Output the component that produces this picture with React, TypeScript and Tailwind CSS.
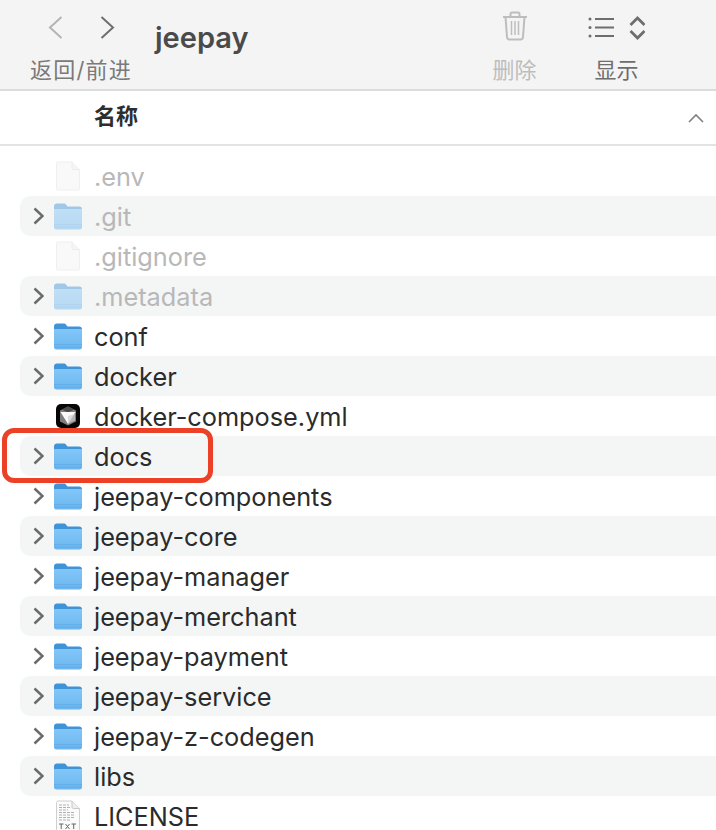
const rows: { name: string; kind: 'file' | 'folder' | 'docker' | 'txt'; dim?: boolean }[] = [
  { name: '.env', kind: 'file', dim: true },
  { name: '.git', kind: 'folder', dim: true },
  { name: '.gitignore', kind: 'file', dim: true },
  { name: '.metadata', kind: 'folder', dim: true },
  { name: 'conf', kind: 'folder' },
  { name: 'docker', kind: 'folder' },
  { name: 'docker-compose.yml', kind: 'docker' },
  { name: 'docs', kind: 'folder' },
  { name: 'jeepay-components', kind: 'folder' },
  { name: 'jeepay-core', kind: 'folder' },
  { name: 'jeepay-manager', kind: 'folder' },
  { name: 'jeepay-merchant', kind: 'folder' },
  { name: 'jeepay-payment', kind: 'folder' },
  { name: 'jeepay-service', kind: 'folder' },
  { name: 'jeepay-z-codegen', kind: 'folder' },
  { name: 'libs', kind: 'folder' },
  { name: 'LICENSE', kind: 'txt' },
]

const cjk = "font-['Inter','Noto_Sans_CJK_SC',sans-serif]"

function FolderIcon({ id }: { id: string }) {
  return (
    <svg width="28" height="27" viewBox="0 0 28 27" className="shrink-0">
      <defs>
        <linearGradient id={`body-${id}`} x1="0" y1="0" x2="0" y2="1">
          <stop offset="0" stopColor="#82c6f7" />
          <stop offset="1" stopColor="#6ab6f0" />
        </linearGradient>
      </defs>
      <path d="M0 3.500C0 1.600 1.200.5 3 .5h6.500c1.300 0 2 .5 2.800 1.400L13.500 3.500H25c2 0 3 1 3 3V12H0Z" fill="#3f93d9" />
      <path d="M0 7c0-.6.4-1 1-1h26c.6 0 1 .4 1 1v17c0 1.700-1 2.500-2.500 2.500h-23C1 26.500 0 25.700 0 24Z" fill={`url(#body-${id})`} />
      <rect x="0" y="21" width="28" height="1" fill="#579fdc" opacity="0.5" />
      <rect x="0" y="23.500" width="28" height="1" fill="#579fdc" opacity="0.5" />
    </svg>
  )
}

function BlankFile() {
  return (
    <svg width="26" height="30" viewBox="0 0 26 30" className="shrink-0">
      <path d="M1.500 2.500c0-1 .6-1.500 1.500-1.500h14l7.500 7.500V27.500c0 1-.6 1.500-1.500 1.500H3c-.9 0-1.500-.5-1.500-1.500Z" fill="#f3f3f3" stroke="#dcdcdc" />
      <path d="M17 1v6c0 1 .5 1.500 1.500 1.500h6" fill="#e9e9e9" stroke="#d6d6d6" />
    </svg>
  )
}

function TxtFile() {
  return (
    <svg width="26" height="32" viewBox="0 0 26 32" className="shrink-0">
      <path d="M1.500 2.500c0-1 .6-1.500 1.500-1.500h14l7.500 7.500V29.500c0 1-.6 1.500-1.500 1.500H3c-.9 0-1.500-.5-1.500-1.500Z" fill="#fbfbfb" stroke="#cfcfcf" />
      <path d="M17 1v6c0 1 .5 1.500 1.500 1.500h6" fill="#eee" stroke="#c8c8c8" />
      <path d="M4 5h10M4 7.500h11M4 10h9M4 12.500h16M4 15h15M4 17.500h16M4 20h12" stroke="#b0b0b0" strokeWidth="1" strokeDasharray="3 1" />
      <path d="M4 24h4.500M6.200 24v5M10.500 24l4 5M14.500 24l-4 5M16.500 24h4.500M18.700 24v5" stroke="#666" strokeWidth="1" fill="none" />
    </svg>
  )
}

function DockerIcon() {
  return (
    <svg width="26" height="26" viewBox="0 0 26 26" className="shrink-0">
      <rect x="1" y="1" width="24" height="24" rx="5" fill="#050505" />
      <path d="M13 3.500L21 7.500V18.500L13 22.500 5 18.500V7.500Z" fill="#7d7d7d" />
      <path d="M13 3.500L19 6.500 13 9.500 7 6.500Z" fill="#4a4a4a" />
      <path d="M5.500 9L20.500 9 13 21Z" fill="#fafafa" />
      <path d="M13 13v8l7-3.500V11Z" fill="#cfcfcf" opacity="0.7" />
    </svg>
  )
}

function Row({ name, kind, dim, striped, id }: { name: string; kind: string; dim?: boolean; striped: boolean; id: string }) {
  return (
    <div className={`ml-[20px] h-10 flex items-center rounded-l-[10px] ${striped ? 'bg-[#f4f5f5]' : ''}`}>
      <div className="w-[34px] shrink-0 pl-[13px]">
        {kind === 'folder' && (
          <svg width="11" height="18" viewBox="0 0 11 18" className="block">
            <path d="M1.500 1.500L9.500 9l-8 7.500" fill="none" stroke="#6b6b6b" strokeWidth="2.500" />
          </svg>
        )}
      </div>
      <div className={`w-[40px] shrink-0 flex ${dim ? 'opacity-45' : ''} ${kind === 'folder' ? '' : 'pl-[1px]'}`}>
        {kind === 'folder' && <FolderIcon id={id} />}
        {kind === 'file' && <BlankFile />}
        {kind === 'docker' && <DockerIcon />}
        {kind === 'txt' && <TxtFile />}
      </div>
      <span className={`text-[25.3px] leading-[26px] pt-[2px] ${dim ? 'text-[#b8b8b8]' : 'text-[#2b2b2b]'}`}>{name}</span>
    </div>
  )
}

export default function App() {
  return (
    <div className={`relative h-[830px] w-[716px] overflow-hidden bg-white ${cjk}`}>
      {/* toolbar */}
      <header className="h-[91px] flex bg-[#f4f4f4] border-b-2 border-[#dcdcdc]">
        <div className="ml-[30px] w-[102px] flex flex-col">
          <div className="h-[54px] pt-[16px] flex pl-[18px] gap-[37px]">
            <svg width="15" height="23" viewBox="0 0 15 23">
              <path d="M13.500 1L2 11.500 13.500 22" fill="none" stroke="#b4b4b4" strokeWidth="2" />
            </svg>
            <svg width="15" height="23" viewBox="0 0 15 23">
              <path d="M1.500 1L13 11.500 1.500 22" fill="none" stroke="#6e6e6e" strokeWidth="2" />
            </svg>
          </div>
          <span className="text-[22px] leading-[32px] tracking-[1.200px] text-[#7a7a7a] whitespace-nowrap">返回/前进</span>
        </div>
        <div className="ml-[23px] pt-[19px] text-[29px] leading-[38px] font-semibold text-[#4a4a4a]">jeepay</div>
        <div className="ml-[244px] w-[44px] flex flex-col items-center">
          <div className="h-[54px] pt-[11px]">
            <svg width="26" height="30" viewBox="0 0 26 30" fill="none" stroke="#bdbdbd" strokeWidth="2">
              <path d="M1 6h24" />
              <path d="M8.500 5.500V3c0-1 .8-1.500 1.500-1.500h6c.8 0 1.500.5 1.500 1.500v2.500" />
              <path d="M3.500 6l1.500 20c.1 1.500 1 2.500 2.500 2.500h11c1.500 0 2.400-1 2.500-2.500L22.500 6" />
              <path d="M9.500 10v14M13 10v14M16.500 10v14" strokeWidth="1.500" />
            </svg>
          </div>
          <span className="text-[22px] leading-[32px] text-[#bdbdbd] whitespace-nowrap">删除</span>
        </div>
        <div className="ml-[52px] w-[56px] flex flex-col items-center">
          <div className="h-[54px] pt-[16px]">
            <svg width="57" height="24" viewBox="0 0 57 24" fill="none" stroke="#6e6e6e">
              <path d="M7 3h19M7 11.500h19M7 20h19" strokeWidth="2" />
              <circle cx="2" cy="3" r="1.500" fill="#6e6e6e" stroke="none" />
              <circle cx="2" cy="11.500" r="1.500" fill="#6e6e6e" stroke="none" />
              <circle cx="2" cy="20" r="1.500" fill="#6e6e6e" stroke="none" />
              <path d="M42.500 9l7-7 7 7M42.500 15l7 7 7-7" strokeWidth="2.800" />
            </svg>
          </div>
          <span className="text-[22px] leading-[32px] text-[#6e6e6e] whitespace-nowrap">显示</span>
        </div>
      </header>

      {/* column header */}
      <div className="h-[55px] flex items-center justify-between border-b-2 border-[#e3e3e3] pl-[94px] pr-[12px]">
        <span className="text-[22px] font-semibold text-[#2e2e2e] pb-[2px]">名称</span>
        <svg width="16" height="10" viewBox="0 0 16 10">
          <path d="M1 9l7-7 7 7" fill="none" stroke="#808080" strokeWidth="1.600" />
        </svg>
      </div>

      {/* file list */}
      <div className="pt-[10px]">
        {rows.map((r, i) => (
          <Row key={r.name} id={String(i)} name={r.name} kind={r.kind} dim={r.dim} striped={i % 2 === 1} />
        ))}
      </div>

      {/* red annotation around docs */}
      <div className="absolute left-[2px] top-[428px] w-[211px] h-[55px] border-[5px] border-[#ec4127] rounded-[12px]" />
    </div>
  )
}
